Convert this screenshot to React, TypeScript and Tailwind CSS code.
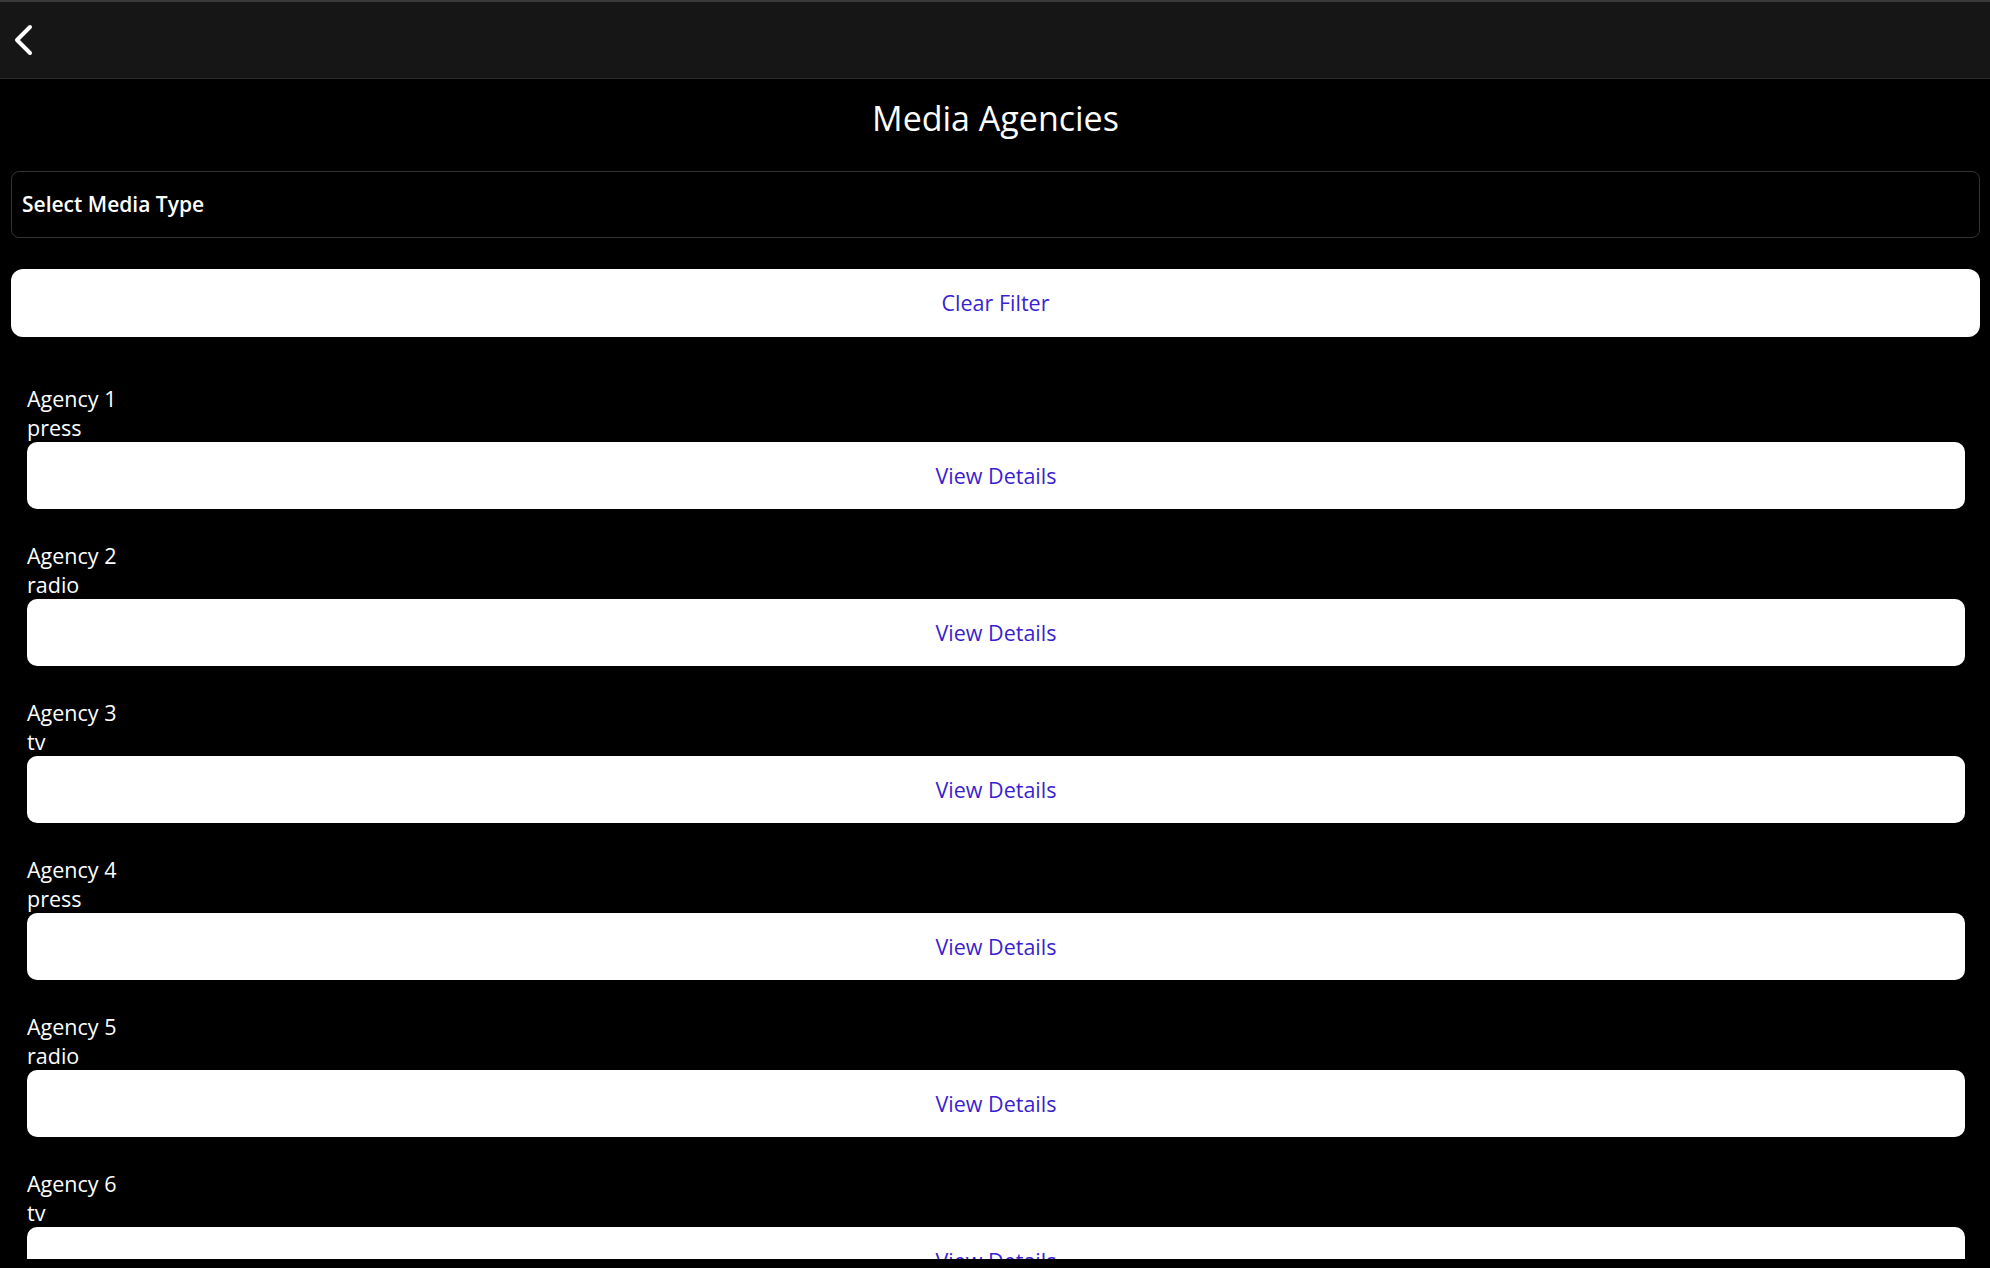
const agencies = [
    { name: "Agency 1", type: "press" },
    { name: "Agency 2", type: "radio" },
    { name: "Agency 3", type: "tv" },
    { name: "Agency 4", type: "press" },
    { name: "Agency 5", type: "radio" },
    { name: "Agency 6", type: "tv" },
];

const BackIcon = () => (
    <svg width="22" height="32" viewBox="0 0 22 32" fill="none">
        <path d="M17 3 L4 16 L17 29" stroke="white" strokeWidth="4" strokeLinecap="round" strokeLinejoin="round" />
    </svg>
);

const App = () => {
    return (
        <div className="h-[1268px] w-full bg-black flex flex-col overflow-hidden text-white font-['Open_Sans',sans-serif]">
            <div className="h-[79px] shrink-0 bg-[#161616] border-t-2 border-[#3a3a3a] border-b border-b-[#2b2b2b] flex items-center pl-[13px]">
                <button className="cursor-pointer">
                    <BackIcon />
                </button>
            </div>

            <div className="h-[1180px] shrink-0 overflow-hidden pl-[11px] pr-[10px]">
                <h1 className="text-[34px] leading-[44px] text-center pt-[17px]">Media Agencies</h1>

                <div className="mt-[31px] h-[67px] border border-[#333] rounded-[8px] flex items-center px-[10px]">
                    <p className="text-[21px] font-semibold">Select Media Type</p>
                </div>

                <button className="mt-[31px] w-full h-[68px] bg-white rounded-[12px] text-[21.5px] text-[#3a1fd1] cursor-pointer">
                    Clear Filter
                </button>

                <div className="mt-[47px] pl-4 pr-[15px]">
                    {agencies.map((a) => (
                        <div key={a.name} className="mb-8">
                            <p className="text-[21.5px] leading-[29px]">{a.name}</p>
                            <p className="text-[21.5px] leading-[29px]">{a.type}</p>
                            <button className="w-full h-[67px] pt-[2px] bg-white rounded-[10px] text-[21.5px] text-[#3a1fd1] cursor-pointer">
                                View Details
                            </button>
                        </div>
                    ))}
                </div>
            </div>
        </div>
    );
};

export default App;
